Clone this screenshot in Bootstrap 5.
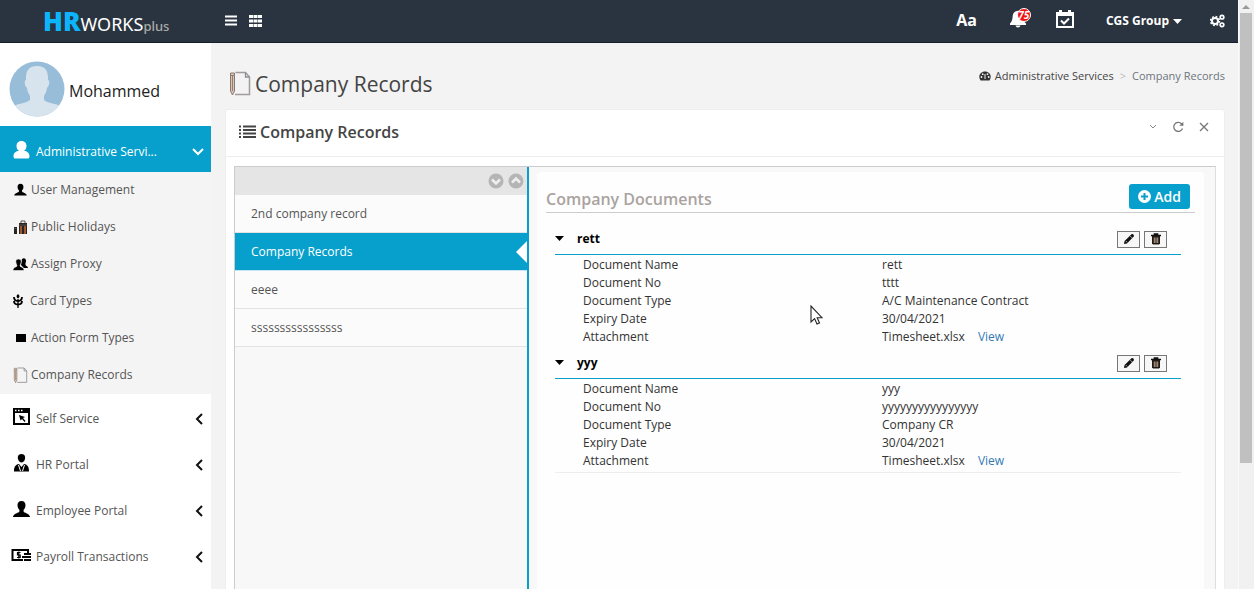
<!DOCTYPE html>
<html lang="en">
<head>
<meta charset="utf-8">
<meta name="viewport" content="width=device-width, initial-scale=1">
<title>HRWORKSplus - Company Records</title>
<link href="https://cdn.jsdelivr.net/npm/bootstrap@5.3.0/dist/css/bootstrap.min.css" rel="stylesheet">
<style>
  :root { --teal: #079fcb; --navy: #2a3441; }
  body { font-family: "Open Sans", "Noto Sans", sans-serif; font-size: 12px; line-height: 18px; color: #333; background: #f3f3f3; }
  a { text-decoration: none; color: inherit; }
  svg { display: block; flex: none; }
  .topbar { height: 43px; background: var(--navy); border-bottom: 1px solid #16202c; color: #fff; }
  .topbar button { color: #fff; background: none; border: 0; padding: 0; }
  .brand-zone { width: 211px; padding: 6px 0 0 43px; line-height: 24px; color: #fff; }
  .brand-hr { font-family: "Noto Sans", sans-serif; font-weight: 900; font-size: 26px; color: #0db4fb; }
  .brand-works { font-family: "Noto Sans", sans-serif; font-size: 18px; }
  .brand-plus { font-family: "Noto Sans", sans-serif; font-size: 13px; font-weight: 500; color: #a9aca6; }
  .quick-tools { margin-left: 14px; gap: 12px; }
  .right-tools { padding-right: 13px; }
  .aa { font-size: 16px; font-weight: 700; margin-bottom: 2px; }
  .group-btn { font-weight: 700; font-size: 12px; margin: 0 28px 0 32px; }
  .count { left: 8px; top: -2px; min-width: 14px; height: 14px; border-radius: 7px; background: #f01010; border: 1px solid #fff; color: #fff; font-size: 10px; line-height: 12px; font-weight: 700; font-style: italic; text-align: center; }
  .side { width: 211px; background: #fff; }
  .profile { height: 83px; padding: 9px 9px 0; font-size: 16px; color: #222; gap: 4px; }
  .menu-top { height: 46px; padding: 4px 8px 0 11px; color: #555; }
  .menu-top.open { background: var(--teal); color: #fff; padding: 5px 7px 0 11px; font-weight: 500; }
  .menu-top svg.lead-icon { width: 21px; margin-top: -4px; }
  .submenu { background: #f4f4f4; }
  .submenu a { height: 37px; padding: 0 0 1px 13px; gap: 3px; color: #555; }
  main { padding: 0 13px 0 14px; }
  .main-top { padding: 26px 0 10px 4px; }
  .page-title { font-size: 21px; line-height: 30px; color: #444; gap: 4px; margin: 0; font-weight: 400; }
  .crumbs { font-size: 11px; color: #444; margin-top: -2px; }
  .crumb-sep { color: #bbb; margin: 0 6px; }
  .panel { background: #fff; border: 1px solid #eee; border-bottom: 0; border-radius: 3px 3px 0 0; }
  .panel-head { height: 47px; border-bottom: 1px solid #eee; padding: 0 15px 2px 13px; color: #777; }
  .panel-head h2 { font-size: 16px; line-height: 22px; font-weight: 600; color: #444; margin: 0; }
  .panel-head button, .sort-bar button { background: none; border: 0; padding: 0; color: inherit; }
  .win-tools { gap: 15px; padding-bottom: 10px; }
  .frame { margin: 9px 8px 0; border: 1px solid #ccc; border-right-color: #ddd; border-bottom: 0; background: #f8f8f8; }
  .rec-list { width: 30%; border-right: 2px solid var(--teal); }
  .sort-bar { height: 28px; background: #e5e5e5; padding-right: 3px; gap: 4px; }
  .rec { height: 38px; padding-left: 16px; background: #fbfbfb; border-bottom: 1px solid #e3e3e3; color: #555; }
  .rec.active { background: var(--teal); color: #fff; border-color: #c5e5f0; }
  .notch { right: 0; top: 8px; border: 11px solid transparent; border-left: 0; border-right-color: #fff; }
  .docs { background: #fefefe; margin: 5px 11px 0 8px; padding: 12px 9px 0; border-radius: 4px 4px 0 0; }
  .docs-head { height: 29px; border-bottom: 1px solid #ccc; padding-right: 5px; }
  .docs-head h3 { font-size: 16px; line-height: 22px; font-weight: 600; color: #aaa3a0; margin: 0; }
  .btn-add { background: var(--teal); color: #fff; border-radius: 3px; font-size: 14px; font-weight: 600; line-height: 25px; height: 25px; padding: 0 9px; border: 0; gap: 3px; }
  .btn-add:hover { background: #0688ae; color: #fff; }
  .doc-groups { padding-top: 11px; }
  .doc-block { margin: 0 14px 0 9px; padding-bottom: 2px; }
  .doc-last { border-bottom: 1px solid #eee; }
  .doc-head { height: 31px; border-bottom: 1px solid var(--teal); color: #000; font-weight: 700; gap: 13px; }
  .doc-tools { margin-right: 14px; }
  .tool { width: 23px; height: 17px; padding: 0; border: 1px solid #777; background: #f7f7f7; color: #111; }
  .doc-data { margin: 1px 0 0 28px; width: calc(100% - 28px); }
  .doc-data th, .doc-data td { width: 50%; padding: 0; font-weight: 400; height: 18px; }
  .doc-data a { color: #337ab7; margin-left: 10px; }
  .rail { width: 16px; background: #f1f1f1; border-left: 1px solid #fafafa; padding: 4px 2px 0 1px; }
  .rail-thumb { height: 77%; width: 12px; background: #c0c0c0; margin-top: 4px; }
  .pointer { left: 41%; top: 133px; }
</style>
</head>
<body>
<svg width="0" height="0" class="position-absolute" aria-hidden="true">
  <defs>
    <symbol id="bust" viewBox="0 0 20 20"><path d="M10 1c3 0 4.300 2 4.200 4.600 0 2-.8 3.700-2 4.700v1.700c0 1.300 6.800 2 6.800 6H1c0-4 6.800-4.700 6.800-6v-1.700c-1.200-1-2-2.700-2-4.700C5.700 3 7 1 10 1z"/></symbol>
    <symbol id="notes" viewBox="0 0 22 26"><path d="M1.500 2h4v18L3.500 24l-2-4z" fill="#dfc3ad" stroke="#877a75"/><path d="M1.500 4.500h4M3.500 5v15" stroke="#8c8078"/><path d="M6.500 1.500h10l4 4.500v17.500H6" fill="none" stroke="#a19b9a" stroke-width="1.500"/><path d="M16.500 1.500V6h4" fill="none" stroke="#87909a" stroke-width="1.300"/></symbol>
    <symbol id="left" viewBox="0 0 8 12"><path d="M7 1 2 6l5 5" fill="none" stroke="#111" stroke-width="2"/></symbol>
    <symbol id="pen" viewBox="0 0 12 12"><path d="m1 11 .6-3L8.500 1.200c1-.9 3.200 1 2.200 2.300L4 10.400z" fill="#111"/><path d="m2.800 8 1.500 1.500M7.200 3l2 2" stroke="#ddd" stroke-width=".7"/></symbol>
    <symbol id="bin" viewBox="0 0 12 12"><path d="M1 2.500h10M4.300 2.500V1h3.400v1.500" fill="none" stroke="#111" stroke-width="1.300"/><path d="M2 3h8v7.500l-1 1H3l-1-1z" fill="#221a16"/><path d="M4.300 4.500v5.500M6 4.500v5.500M7.700 4.500v5.500" stroke="#c9b39c" stroke-width=".9"/></symbol>
  </defs>
</svg>
<div class="d-flex vh-100 overflow-hidden">
  <div class="flex-grow-1 d-flex flex-column">
    <header class="topbar d-flex align-items-center flex-shrink-0">
      <a href="#" class="brand-zone"><span class="brand-hr">HR</span><span class="brand-works">WORKS</span><span class="brand-plus">plus</span></a>
      <div class="quick-tools d-flex align-items-center">
        <button type="button" aria-label="Toggle menu"><svg width="12" height="12"><path d="M0 1.500h12M0 5.500h12M0 9.500h12" stroke="#fff" stroke-width="2"/></svg></button>
        <button type="button" aria-label="Apps"><svg width="13" height="12"><path d="M0 0h4v3H0zM4.500 0h4v3h-4zM9 0h4v3H9zM0 4.500h4v3H0zM4.500 4.500h4v3h-4zM9 4.500h4v3H9zM0 9h4v3H0zM4.500 9h4v3h-4zM9 9h4v3H9z" fill="#fff"/></svg></button>
      </div>
      <div class="d-flex align-items-center ms-auto right-tools">
        <button type="button" class="aa me-4">Aa</button>
        <button type="button" class="position-relative ms-2 mb-1" aria-label="Notifications, 75"><svg width="23" height="18" viewBox="0 0 23 18"><path d="M8 1c4-1 6 1 6 5 0 4 1 6 3 7.500v1.500H1v-1.500C3 12 3.500 9 3.700 6 4 3 5.500 1.500 8 1zM6.500 15.500h5C11 18 7 18 6.500 15.500z" fill="#fff"/></svg><span class="count position-absolute">75</span></button>
        <button type="button" class="ms-4 mb-1" aria-label="Tasks"><svg width="18" height="18"><path d="M1 5h16v12H1z" fill="none" stroke="#fff" stroke-width="2"/><path d="M0 2h18v4H0zM3 0h3v4H3zM12 0h3v4h-3z" fill="#fff"/><path d="m5 10.500 3 3 5-5" fill="none" stroke="#fff" stroke-width="2"/></svg></button>
        <button type="button" class="group-btn d-flex align-items-center gap-1">CGS Group<svg width="9" height="5"><path d="M0 0h9L4.500 5z" fill="#fff"/></svg></button>
        <button type="button" aria-label="Settings"><svg width="15" height="14" viewBox="0 0 15 14"><circle cx="5" cy="7" r="3" fill="none" stroke="#fff" stroke-width="2"/><circle cx="5" cy="7" r="4.500" fill="none" stroke="#fff" stroke-width="1.500" stroke-dasharray="1.800 1.730"/><g fill="none" stroke="#fff" stroke-width="1.700"><circle cx="12" cy="3.200" r="1.800"/><circle cx="12" cy="10.800" r="1.800"/></g></svg></button>
      </div>
    </header>
    <div class="d-flex flex-grow-1 overflow-hidden">
      <nav class="side flex-shrink-0" aria-label="Main">
        <div class="profile d-flex align-items-center">
          <svg width="56" height="56" viewBox="0 0 56 56"><defs><clipPath id="disc"><circle cx="28" cy="28" r="27.500"/></clipPath></defs><circle cx="28" cy="28" r="27.500" fill="#98bdd9"/><path clip-path="url(#disc)" fill="#d7e4ee" d="M28 5c9 0 11.500 6 11 14 2 0 1.500 6-.8 7.500C37.500 31 36 33 35 35v4c4 4 15 3 18 8v9H3v-9c3-5 14-4 18-8v-4c-1-2-2.500-4-3.200-8.500C15.500 25 15 19 17 19 16.500 11 19 5 28 5z"/></svg>
          <span class="pt-1">Mohammed</span>
        </div>
        <a href="#" class="menu-top open d-flex align-items-center"><svg class="lead-icon" height="18" viewBox="0 0 21 18"><path d="M10.500 0c3.500 0 5 2.500 5 5s-1 4-2.500 4.800c3 .5 5.500 2.200 5.500 5.200 0 2-.5 2.500-2 2.500h-12c-1.500 0-2-.5-2-2.500 0-3 2.500-4.700 5.500-5.200C6.500 9 5.500 7.500 5.500 5s1.500-5 5-5z" fill="#fff"/></svg><span class="ms-1">Administrative Servi...</span><svg class="ms-auto" width="12" height="8"><path d="m1 1 5 5 5-5" fill="none" stroke="#fff" stroke-width="2"/></svg></a>
        <div class="submenu">
          <a href="#" class="d-flex align-items-center"><svg width="15" height="14"><use href="#bust"/></svg>User Management</a>
          <a href="#" class="d-flex align-items-center"><svg width="15" height="14"><path d="M1 7h3v7H1zM6 3h8v11H6z" fill="#2b2320"/><path d="M8 3V1h4v2M1.500 8.500h2M6 5h8" fill="none" stroke="#555"/><path d="M8 6v8M12 6v8" stroke="#c26b35" stroke-width="1.500"/></svg>Public Holidays</a>
          <a href="#" class="d-flex align-items-center"><svg width="15" height="13"><path d="M9 1c3-2 5 1 3.500 4v2c0 1 2.500 1 2.500 3h-4L8 7z"/><path d="M5.500 1C8 1 8.500 3 8 5c-.3 1.200-1 2-1 3s4 1 4 4.500H0C0 9 4 9 4 8S3.300 6.200 3 5c-.5-2 0-4 2.500-4z" stroke="#f4f4f4" stroke-width=".6"/></svg>Assign Proxy</a>
          <a href="#" class="d-flex align-items-center"><svg width="10" height="14" viewBox="0 0 10 14" class="me-1"><path d="M5 0c2 1.500 2 3 0 4.500C3 3 3 1.500 5 0z"/><path d="M1 3c0 2.500 1.500 4 4 4 2.500 0 4-1.500 4-4M1 7c0 2.500 1.500 3.500 4 3.500S9 9.500 9 7" fill="none" stroke="#000" stroke-width="1.800"/><path d="M5 5v9" stroke="#000" stroke-width="1.300"/></svg>Card Types</a>
          <a href="#" class="d-flex align-items-center"><svg width="15" height="10"><path d="M3 1h10v8H3z"/></svg>Action Form Types</a>
          <a href="#" class="d-flex align-items-center"><svg width="15" height="17"><use href="#notes"/></svg>Company Records</a>
        </div>
        <a href="#" class="menu-top d-flex align-items-center"><svg class="lead-icon" height="18" viewBox="0 0 21 18"><path d="M3 1h15v15H3z" fill="#fff" stroke="#000" stroke-width="2"/><path d="M2 0h17v5H2z"/><path d="M4 2.500h1.500M7 2.500h1.500M10 2.500h1.500" stroke="#fff" stroke-width="1.500"/><path d="m8 7 6 2-2 1 2.500 3-1 1-2.500-3-1.500 1.500z"/></svg><span class="ms-1">Self Service</span><svg class="ms-auto" width="8" height="12"><use href="#left"/></svg></a>
        <a href="#" class="menu-top d-flex align-items-center"><svg class="lead-icon" height="18" viewBox="0 0 21 18"><path d="M10.500 0C14 0 14.500 3 14 5c-.5 2-2 3.500-3.500 3.500S7.500 7 7 5c-.5-2 0-5 3.500-5zM3 17.500C3 12 5 10.500 8 10l2.500 3L13 10c3 .5 5 2 5 7.500z"/><path d="m7.500 11 2 6M13.500 11l-2 6" stroke="#fff"/></svg><span class="ms-1">HR Portal</span><svg class="ms-auto" width="8" height="12"><use href="#left"/></svg></a>
        <a href="#" class="menu-top d-flex align-items-center"><svg class="lead-icon" height="19"><use href="#bust"/></svg><span class="ms-1">Employee Portal</span><svg class="ms-auto" width="8" height="12"><use href="#left"/></svg></a>
        <a href="#" class="menu-top d-flex align-items-center"><svg class="lead-icon" height="14" viewBox="0 0 21 14"><path d="M12 12H1.500V2H17v3" fill="none" stroke="#000" stroke-width="2"/><path d="M13 5h7v2h-7zM11 8h9v2h-9zM13 11h7v2h-7z"/><path d="M9.500 4.500H6.500v2.500h2.700v2.500H6M7.800 3.500v7" fill="none" stroke="#000" stroke-width="1.200"/></svg><span class="ms-1">Payroll Transactions</span><svg class="ms-auto" width="8" height="12"><use href="#left"/></svg></a>
      </nav>
      <main class="flex-grow-1 d-flex flex-column">
        <div class="d-flex justify-content-between align-items-start main-top">
          <h1 class="page-title d-flex align-items-center"><svg width="22" height="26"><use href="#notes"/></svg>Company Records</h1>
          <nav class="crumbs d-flex align-items-center" aria-label="Breadcrumb"><svg width="12" height="10" class="me-1" viewBox="0 0 12 10"><path d="M1.500 9.500C-1.500 5 1.500.500 6 .500S13.500 5 10.500 9.500z" fill="#333"/><g fill="#f3f3f3"><circle cx="2.500" cy="6" r=".9"/><circle cx="3.700" cy="3.200" r=".9"/><circle cx="8.500" cy="3.200" r=".9"/><circle cx="9.700" cy="6" r=".9"/></g><path d="M6 8V3" stroke="#f3f3f3"/></svg><a href="#">Administrative Services</a><span class="crumb-sep">&gt;</span><span class="text-secondary">Company Records</span></nav>
        </div>
        <section class="panel flex-grow-1 d-flex flex-column">
          <div class="panel-head d-flex align-items-center flex-shrink-0">
            <svg width="17" height="14" class="me-1"><path d="M0 1.500h2M0 5h2M0 8.500h2M0 12h2M4 1.500h13M4 5h13M4 8.500h13M4 12h13" stroke="#444" stroke-width="2"/></svg>
            <h2>Company Records</h2>
            <div class="d-flex align-items-center ms-auto win-tools">
              <button type="button" aria-label="Collapse"><svg width="8" height="6"><path d="m1 1 3 3 3-3" fill="none" stroke="#888"/></svg></button>
              <button type="button" aria-label="Refresh"><svg width="12" height="12"><path d="M10.500 7.500A4.500 4.500 0 1 1 9.500 2.800L11 4.300" fill="none" stroke="#777" stroke-width="1.300"/><path d="M11.300.8v4h-4z" fill="#777"/></svg></button>
              <button type="button" aria-label="Close"><svg width="10" height="10"><path d="m1 1 8 8M9 1 1 9" stroke="#777" stroke-width="1.300"/></svg></button>
            </div>
          </div>
          <div class="frame flex-grow-1 d-flex">
            <div class="rec-list flex-shrink-0">
              <div class="sort-bar d-flex align-items-center justify-content-end">
                <button type="button" aria-label="Move down"><svg width="16" height="16"><circle cx="8" cy="8" r="7.500" fill="#b5b5b5"/><path d="m4 6.500 4 4 4-4" fill="none" stroke="#eee" stroke-width="2.500"/></svg></button>
                <button type="button" aria-label="Move up"><svg width="16" height="16"><circle cx="8" cy="8" r="7.500" fill="#b5b5b5"/><path d="m4 9.500 4-4 4 4" fill="none" stroke="#eee" stroke-width="2.500"/></svg></button>
              </div>
              <a href="#" class="rec d-flex align-items-center">2nd company record</a>
              <a href="#" class="rec active d-flex align-items-center position-relative">Company Records<span class="notch position-absolute"></span></a>
              <a href="#" class="rec d-flex align-items-center">eeee</a>
              <a href="#" class="rec d-flex align-items-center">ssssssssssssssss</a>
            </div>
            <div class="docs flex-grow-1 position-relative">
              <div class="docs-head d-flex justify-content-between align-items-start">
                <h3 class="pt-1">Company Documents</h3>
                <button type="button" class="btn btn-add d-flex align-items-center"><svg width="13" height="13"><circle cx="6.500" cy="6.500" r="6.500" fill="#fff"/><path d="M6.500 3v7M3 6.500h7" stroke="#079fcb" stroke-width="2"/></svg>Add</button>
              </div>
              <div class="doc-groups">
                <div class="doc-block">
                  <div class="doc-head d-flex align-items-center"><svg width="9" height="6"><path d="M0 0h9L4.500 5z"/></svg><span>rett</span>
                    <div class="ms-auto d-flex gap-1 doc-tools"><button type="button" class="tool" aria-label="Edit rett"><svg class="mx-auto" width="12" height="12"><use href="#pen"/></svg></button><button type="button" class="tool" aria-label="Delete rett"><svg class="mx-auto" width="12" height="12"><use href="#bin"/></svg></button></div></div>
                  <table class="doc-data">
                    <tr><th scope="row">Document Name</th><td>rett</td></tr>
                    <tr><th scope="row">Document No</th><td>tttt</td></tr>
                    <tr><th scope="row">Document Type</th><td>A/C Maintenance Contract</td></tr>
                    <tr><th scope="row">Expiry Date</th><td>30/04/2021</td></tr>
                    <tr><th scope="row">Attachment</th><td>Timesheet.xlsx <a href="#">View</a></td></tr>
                  </table>
                </div>
                <div class="doc-block doc-last">
                  <div class="doc-head d-flex align-items-center"><svg width="9" height="6"><path d="M0 0h9L4.500 5z"/></svg><span>yyy</span>
                    <div class="ms-auto d-flex gap-1 doc-tools"><button type="button" class="tool" aria-label="Edit yyy"><svg class="mx-auto" width="12" height="12"><use href="#pen"/></svg></button><button type="button" class="tool" aria-label="Delete yyy"><svg class="mx-auto" width="12" height="12"><use href="#bin"/></svg></button></div></div>
                  <table class="doc-data">
                    <tr><th scope="row">Document Name</th><td>yyy</td></tr>
                    <tr><th scope="row">Document No</th><td>yyyyyyyyyyyyyyyy</td></tr>
                    <tr><th scope="row">Document Type</th><td>Company CR</td></tr>
                    <tr><th scope="row">Expiry Date</th><td>30/04/2021</td></tr>
                    <tr><th scope="row">Attachment</th><td>Timesheet.xlsx <a href="#">View</a></td></tr>
                  </table>
                </div>
              </div>
              <svg class="pointer position-absolute" width="13" height="20" viewBox="0 0 13 20"><path d="M1 1v16l3.600-3.400L7 19l2.500-1-2.300-5.300H12z" fill="#fff" stroke="#222" stroke-width="1.100"/></svg>
            </div>
          </div>
        </section>
      </main>
    </div>
  </div>
  <div class="rail flex-shrink-0" aria-hidden="true"><svg width="12" height="5"><path d="M2 5h8L6 1z" fill="#999"/></svg><div class="rail-thumb"></div></div>
</div>
<script src="https://cdn.jsdelivr.net/npm/bootstrap@5.3.0/dist/js/bootstrap.bundle.min.js"></script>
</body>
</html>
